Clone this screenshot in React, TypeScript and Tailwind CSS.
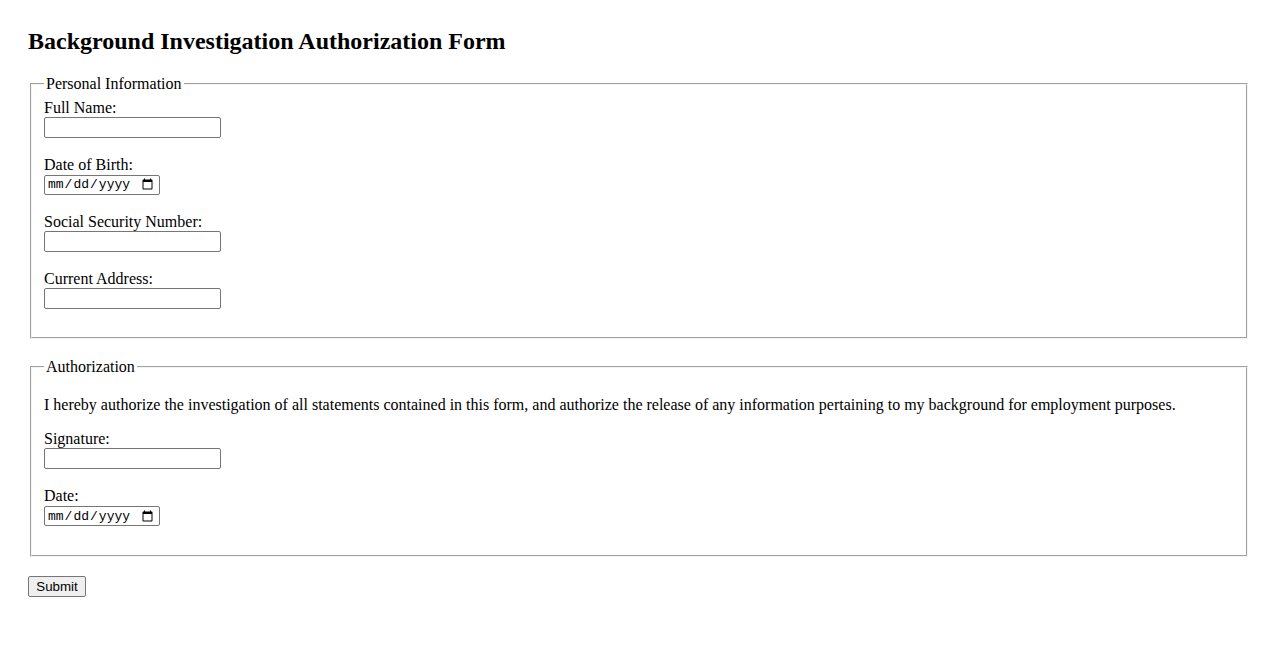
import React from 'react';

const textInput =
  'w-[177px] h-[21px] px-[2px] border border-[#767676] rounded-[2px] bg-white text-[13.33px] align-middle [font-family:"Liberation_Sans",Arial,sans-serif]';
const dateInput =
  'w-[116px] h-[20px] mt-[1px] pl-[2px] pr-[3px] border border-[#767676] rounded-[2px] bg-white text-[13px] align-middle [font-family:"Liberation_Mono",monospace]';
const fieldsetCls =
  'mx-[2px] mb-[19px] border-2 [border-style:groove] border-[#f4f4f4] px-3 pt-[5.6px] min-w-min';

export default function App() {
  return (
    <div className="bg-white text-black min-h-[650px] p-[28px] text-[16px] leading-[normal] [font-family:'Liberation_Serif','Times_New_Roman',serif]">
      <h2 className="text-[24px] font-bold mb-[19.92px]">Background Investigation Authorization Form</h2>
      <form onSubmit={(e) => e.preventDefault()}>
        <fieldset className={`${fieldsetCls} pb-[10px]`}>
          <legend className="px-[2px]">Personal Information</legend>
          <label htmlFor="name">Full Name:</label>
          <br />
          <input id="name" type="text" className={textInput} />
          <br />
          <br />
          <label htmlFor="dob">Date of Birth:</label>
          <br />
          <input id="dob" type="date" className={dateInput} />
          <br />
          <br />
          <label htmlFor="ssn">Social Security Number:</label>
          <br />
          <input id="ssn" type="text" className={textInput} />
          <br />
          <br />
          <label htmlFor="address">Current Address:</label>
          <br />
          <input id="address" type="text" className={textInput} />
          <br />
          <br />
        </fieldset>

        <fieldset className={`${fieldsetCls} pb-[11px]`}>
          <legend className="px-[2px]">Authorization</legend>
          <p className="mt-[15px] mb-4">
            I hereby authorize the investigation of all statements contained in this form, and authorize the release of any information pertaining to my background for employment purposes.
          </p>
          <label htmlFor="signature">Signature:</label>
          <br />
          <input id="signature" type="text" className={textInput} />
          <br />
          <br />
          <label htmlFor="date">Date:</label>
          <br />
          <input id="date" type="date" className={dateInput} />
          <br />
          <br />
        </fieldset>

        <button
          type="submit"
          className="w-[58px] h-[21px] border border-[#767676] rounded-[2px] bg-[#efefef] text-[13.33px] leading-none text-center [font-family:'Liberation_Sans',Arial,sans-serif]"
        >
          Submit
        </button>
      </form>
    </div>
  );
}
